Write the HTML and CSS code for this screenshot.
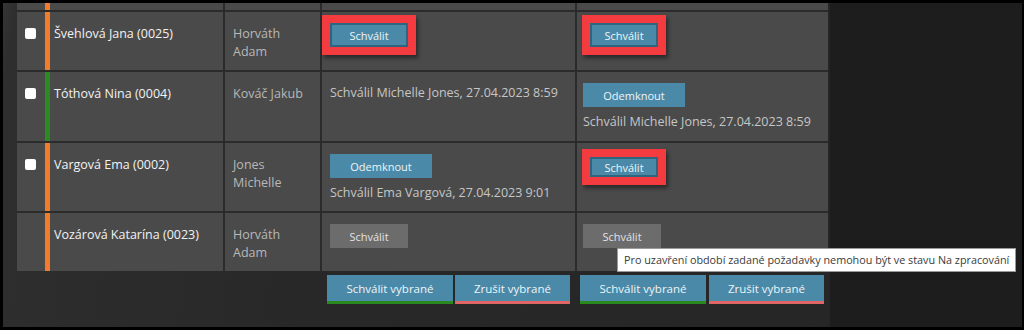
FILE: index.html
```html
<!DOCTYPE html>
<html lang="cs">
<head>
    <meta charset="UTF-8">
    <meta name="viewport" content="width=device-width, initial-scale=1.0">
    <title>Schvalování požadavků</title>
    <link rel="stylesheet" href="styles.css">
</head>
<body>
    <div class="screen">
        <div class="main">
            <table class="grid">
                <colgroup>
                    <col class="c-check">
                    <col class="c-name">
                    <col class="c-who">
                    <col class="c-one">
                    <col class="c-two">
                </colgroup>
                <tbody>
                    <!-- konec předchozího řádku -->
                    <tr class="stub">
                        <td></td>
                        <td class="name orange"></td>
                        <td class="who"></td>
                        <td class="one"></td>
                        <td class="two"></td>
                    </tr>
                    <tr class="r1">
                        <td class="check"><input type="checkbox"></td>
                        <td class="name orange">Švehlová Jana (0025)</td>
                        <td class="who">Horváth Adam</td>
                        <td class="one"><button class="btn approve marked">Schválit</button></td>
                        <td class="two"><button class="btn approve marked tight">Schválit</button></td>
                    </tr>
                    <tr class="r2">
                        <td class="check"><input type="checkbox"></td>
                        <td class="name green">Tóthová Nina (0004)</td>
                        <td class="who">Kováč Jakub</td>
                        <td class="one"><div class="status first">Schválil Michelle Jones, 27.04.2023 8:59</div></td>
                        <td class="two">
                            <button class="btn unlock">Odemknout</button>
                            <div class="status below">Schválil Michelle Jones, 27.04.2023 8:59</div>
                        </td>
                    </tr>
                    <tr class="r3">
                        <td class="check"><input type="checkbox"></td>
                        <td class="name orange">Vargová Ema (0002)</td>
                        <td class="who">Jones Michelle</td>
                        <td class="one">
                            <button class="btn unlock">Odemknout</button>
                            <div class="status below">Schválil Ema Vargová, 27.04.2023 9:01</div>
                        </td>
                        <td class="two"><button class="btn approve marked tight short">Schválit</button></td>
                    </tr>
                    <tr class="r4">
                        <td class="check"></td>
                        <td class="name orange">Vozárová Katarína (0023)</td>
                        <td class="who">Horváth Adam</td>
                        <td class="one"><button class="btn approve off">Schválit</button></td>
                        <td class="two">
                            <span class="tip-anchor">
                                <button class="btn approve off">Schválit</button>
                                <span class="tooltip">Pro uzavření období zadané požadavky nemohou být ve stavu Na zpracování</span>
                            </span>
                        </td>
                    </tr>
                </tbody>
                <tfoot>
                    <tr>
                        <td></td>
                        <td></td>
                        <td></td>
                        <td class="bulk one">
                            <button class="bulk-btn ok">Schválit vybrané</button><button class="bulk-btn cancel">Zrušit vybrané</button>
                        </td>
                        <td class="bulk two">
                            <button class="bulk-btn ok">Schválit vybrané</button><button class="bulk-btn cancel">Zrušit vybrané</button>
                        </td>
                    </tr>
                </tfoot>
            </table>
        </div>
        <div class="side"></div>
    </div>
</body>
</html>
```

FILE: styles.css
```css
body {
    margin: 0;
    background-color: #000;
    font-family: "Open Sans", "Noto Sans", sans-serif;
    font-size: 12px;
}

.screen {
    display: flex;
    height: 324px;
    margin: 3px 2px 3px 3px;
}

/* zona s tabulkou */
.main {
    position: relative;
    z-index: 1;
    width: 826px;
    padding-left: 14px;
    box-sizing: border-box;
    background: linear-gradient(100deg, #353535 0, #2e2e2e 14px, #282828 40%, #262626 100%);
}

.side {
    flex-grow: 1;
    background-color: #1d1d1d;
    border-left: 1px solid #242424;
}

.grid {
    width: 811px;
    table-layout: fixed;
    border-collapse: separate;
    border-spacing: 0;
}

.c-check { width: 28px; }
.c-name { width: 180px; }
.c-who { width: 97px; }
.c-one { width: 255px; }
.c-two { width: 251px; }

.grid tbody td {
    background-color: #4a4a4a;
    border-bottom: 2px solid #2b2b2b;
    vertical-align: top;
    padding: 11px 8px 0;
    line-height: 18px;
}

.grid tbody tr:last-child td {
    border-bottom: none;
}

.grid tbody td.name,
.grid tbody td.who,
.grid tbody td.one {
    border-right: 2px solid #2b2b2b;
}

.r1 { height: 60px; }
.r2 { height: 71px; }
.r3 { height: 70px; }
.r4 { height: 58px; }

.grid tbody td.check {
    padding: 16px 0 0 8px;
}

.check input {
    appearance: none;
    display: block;
    width: 11px;
    height: 11px;
    margin: 0;
    background-color: #fff;
    border-radius: 2px;
}

.grid tbody td.name {
    padding-top: 13px;
    padding-left: 9px;
    color: #f2f2f2;
    font-size: 12.5px;
}

.orange { box-shadow: inset 5px 0 0 #f47a2c; }
.green { box-shadow: inset 5px 0 0 #2d8a22; }

.grid tbody td.who {
    padding-top: 13px;
    color: #b8b8b8;
    font-size: 12.5px;
}

.grid tbody td.two {
    padding-left: 6px;
}

/* oříznutý řádek nahoře */
.grid tr.stub { height: 9px; }
.grid tbody tr.stub td { padding: 0; }

.status {
    color: #c6c6c6;
    font-size: 12.5px;
}

.status.first {
    margin-top: 1px;
}

.status.below {
    margin-top: 6px;
}

/* tlačítka */
.btn {
    display: block;
    height: 24px;
    padding: 0;
    border: none;
    color: #eef4f7;
    font-family: inherit;
    font-size: 11px;
    cursor: pointer;
}

.approve {
    width: 78px;
    background-color: #4a8aa8;
}

.unlock {
    width: 102px;
    background-color: #4a8aa8;
}

.off {
    background-color: #6c6c6c;
    color: #e2e2e2;
}

/* červené zvýraznění */
.marked {
    box-shadow: inset 0 0 0 2px #2f6580, 0 0 0 8px #f33b40, 2px 3px 4px 8px rgba(0, 0, 0, 0.45);
}

.marked.tight {
    width: 68px;
    margin-left: 7px;
}

.marked.short {
    height: 20px;
    margin-top: 3px;
}

.tip-anchor {
    position: relative;
    display: inline-block;
}

.tooltip {
    position: absolute;
    top: 100%;
    left: 34px;
    z-index: 5;
    white-space: nowrap;
    background-color: #fff;
    color: #3a3a3a;
    border: 1px solid #9a9a9a;
    padding: 2px 6px;
    line-height: 18px;
    font-size: 10.8px;
}

/* hromadné akce */
.grid tfoot td {
    padding: 4px 0 0;
}

.grid tfoot td.one { padding-left: 5px; }
.grid tfoot td.two { padding-left: 3px; }

.bulk {
    white-space: nowrap;
}

.bulk-btn {
    height: 29px;
    padding: 0;
    border: none;
    background-color: #4a8aa8;
    color: #eef4f7;
    font-family: inherit;
    font-size: 11.5px;
    vertical-align: top;
    cursor: pointer;
}

.bulk-btn.ok {
    width: 126px;
    border-bottom: 3px solid #2b8a1f;
}

.bulk-btn.cancel {
    width: 115px;
    margin-left: 2px;
    border-bottom: 3px solid #e06565;
}

.two .bulk-btn.cancel {
    margin-left: 3px;
}
```
